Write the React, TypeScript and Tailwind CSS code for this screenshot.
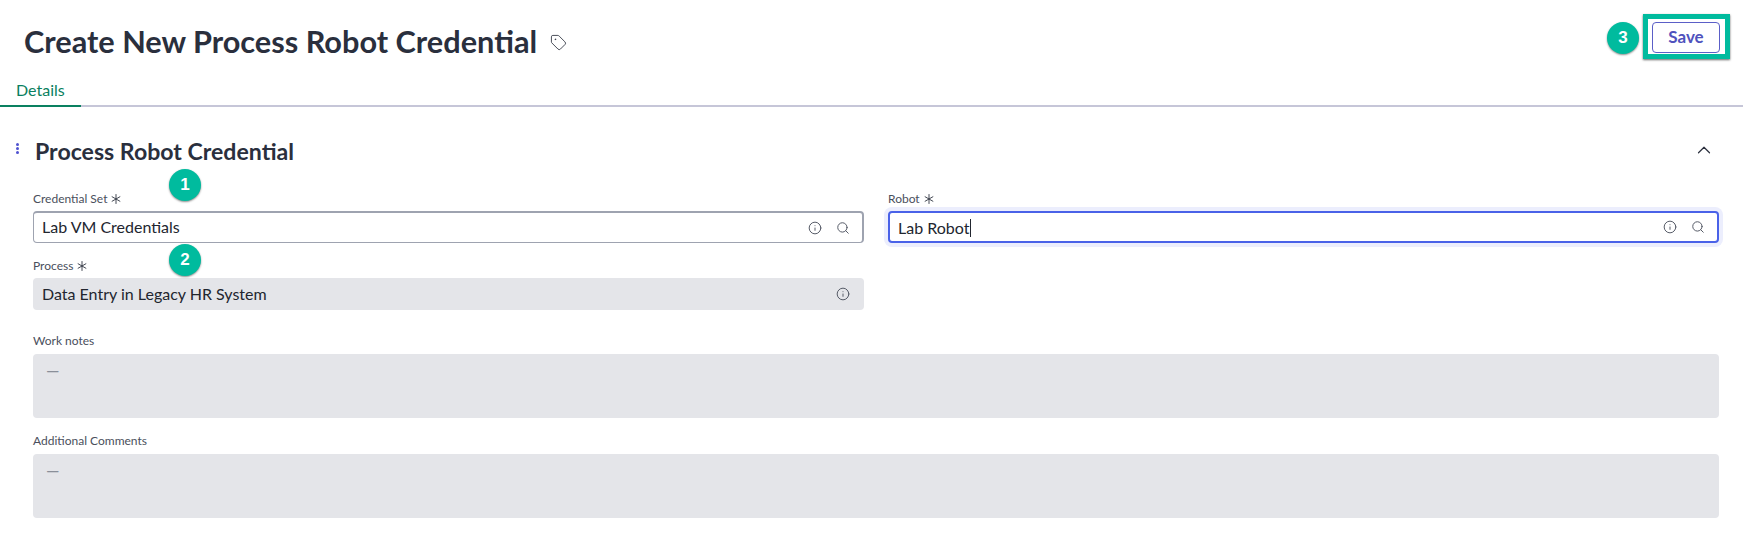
import { Asterisk, ChevronUp, Info, Search, Tag } from "lucide-react";

const font = "font-['Lato','Noto_Sans',sans-serif]";

function Badge({ n, className = "" }: { n: number; className?: string }) {
  return (
    <span
      className={`flex h-8 w-8 items-center justify-center rounded-full bg-[#00bb9e] font-['Liberation_Sans',sans-serif] text-[17px] font-bold text-white shadow-[0_1px_2px_rgba(0,0,0,0.45)] ${className}`}
    >
      {n}
    </span>
  );
}

function Label({ text, required }: { text: string; required?: boolean }) {
  return (
    <div className="flex h-4 items-center pb-px text-[12px] leading-4 text-[#4a4f5c]">
      {text}
      {required && <Asterisk size={18} strokeWidth={1.2} className="text-[#2f3441]" />}
    </div>
  );
}

function Field({
  label,
  value,
  state = "normal",
  search = true,
  caret,
}: {
  label: string;
  value: string;
  state?: "normal" | "focus" | "readonly";
  search?: boolean;
  caret?: boolean;
}) {
  const box =
    state === "focus"
      ? "border-2 border-[#4a62e8] bg-white pl-[8px] pr-[12px] ring-[4px] ring-[#eceefd]"
      : state === "readonly"
        ? "bg-[#e4e5e9] pl-[9px] pr-[14px]"
        : "border border-[#9ea3b0] border-t-2 border-r-2 bg-white pl-[8px] pr-[12px]";
  return (
    <div>
      <Label text={label} required />
      <div className={`mt-1 flex h-8 items-center rounded-[4px] ${box}`}>
        <span className="-mt-px flex-1 text-[16px] leading-5 text-[#22262f]">
          {value}
          {caret && <span className="ml-px inline-block h-[18px] w-px translate-y-[3px] bg-[#22262f]" />}
        </span>
        <div className="flex items-center gap-[14px] text-[#555a66]">
          <Info size={14} strokeWidth={1.7} />
          {search && <Search size={14} strokeWidth={1.7} />}
        </div>
      </div>
    </div>
  );
}

function Notes({ label }: { label: string }) {
  return (
    <div>
      <Label text={label} />
      <div className="mt-[5px] h-16 rounded-[4px] bg-[#e4e5e9] px-[13px] pt-[7px] text-[17px] leading-5 text-[#8a8f99]">
        —
      </div>
    </div>
  );
}

export default function App() {
  return (
    <div className={`min-h-[554px] bg-white ${font}`}>
      <header className="flex h-[73px] items-start justify-between pl-6 pr-[13px] pt-[14px]">
        <div className="flex items-center gap-[13px] pt-[8px]">
          <h1 className="text-[30.7px] font-bold leading-10 text-[#2a2f3d]">Create New Process Robot Credential</h1>
          <Tag size={17} strokeWidth={1.3} className="mt-[1px] text-[#3a3f4b]" />
        </div>
        <div className="flex items-center gap-[4px]">
          <Badge n={3} className="mt-[2px]" />
          <div className="border-[5px] border-[#00bb9e] bg-white pb-px pl-1 pr-[5px] pt-[3px] shadow-[0_1px_2px_rgba(0,0,0,0.6)]">
            <button className="flex h-[31px] w-[68px] items-center justify-center rounded-[4px] border border-[#5b5fc7] pb-px text-[17px] font-bold text-[#4f52bd]">
              Save
            </button>
          </div>
        </div>
      </header>

      <nav className="h-[34px] border-b-2 border-[#c6c6d8]">
        <div className="h-[34px] w-[81px] border-b-2 border-[#0a8060] pl-[16px] text-[16px] leading-[33px] text-[#0a8060]">
          Details
        </div>
      </nav>

      <section className="relative pt-[29px]">
        <div className="flex items-start justify-between pl-[16px] pr-[28px]">
          <div className="flex items-start gap-[16px]">
            <div className="mt-[7px] flex flex-col gap-px">
              <span className="h-[3px] w-[3px] rounded-full bg-[#4f52d0]" />
              <span className="h-[3px] w-[3px] rounded-full bg-[#4f52d0]" />
              <span className="h-[3px] w-[3px] rounded-full bg-[#4f52d0]" />
            </div>
            <h2 className="-mt-px text-[23.1px] font-bold leading-8 text-[#2a2f3d]">Process Robot Credential</h2>
          </div>
          <ChevronUp size={22} strokeWidth={1.3} className="mt-[3px] text-[#2a2f3d]" />
        </div>

        <div className="relative mt-[24px] pl-[33px] pr-6">
          <Badge n={1} className="absolute left-[169px] top-[-22px]" />
          <Badge n={2} className="absolute left-[169px] top-[53px]" />
          <div className="grid grid-cols-2 gap-x-6 gap-y-[15px]">
            <Field label="Credential Set" value="Lab VM Credentials" />
            <Field label="Robot" value="Lab Robot" state="focus" caret />
            <Field label="Process" value="Data Entry in Legacy HR System" state="readonly" search={false} />
          </div>
          <div className="mt-[23px] flex flex-col gap-[15px]">
            <Notes label="Work notes" />
            <Notes label="Additional Comments" />
          </div>
        </div>
      </section>
    </div>
  );
}
